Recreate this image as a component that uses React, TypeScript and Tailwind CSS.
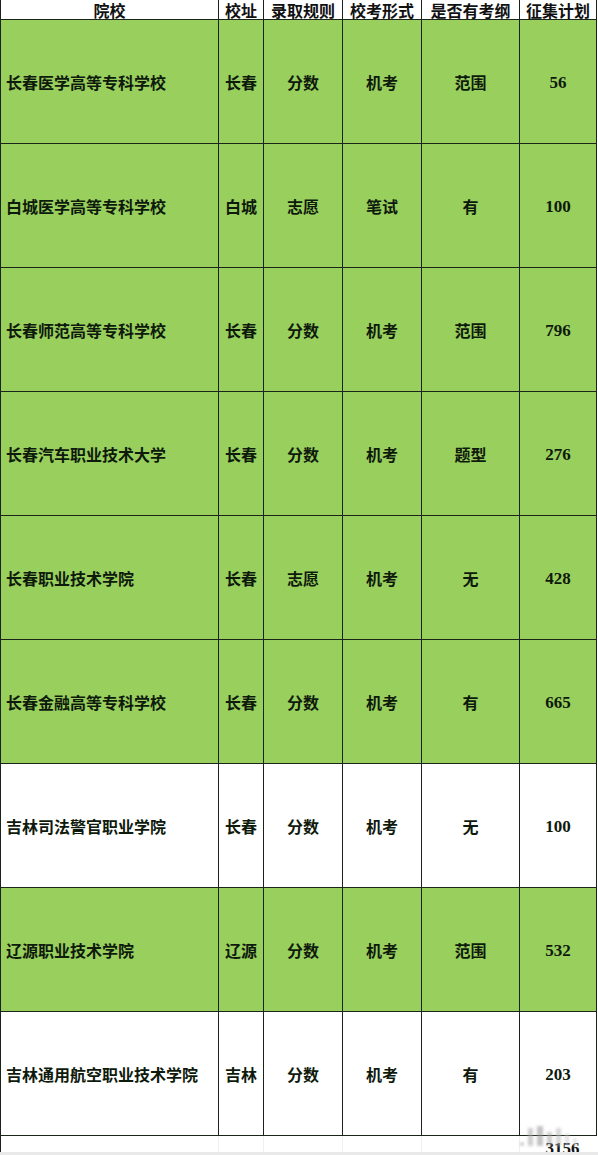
import React from "react";

type Row = { name: string; loc: string; rule: string; form: string; outline: string; plan: string; green: boolean };

const rows: Row[] = [
  { name: "长春医学高等专科学校", loc: "长春", rule: "分数", form: "机考", outline: "范围", plan: "56", green: true },
  { name: "白城医学高等专科学校", loc: "白城", rule: "志愿", form: "笔试", outline: "有", plan: "100", green: true },
  { name: "长春师范高等专科学校", loc: "长春", rule: "分数", form: "机考", outline: "范围", plan: "796", green: true },
  { name: "长春汽车职业技术大学", loc: "长春", rule: "分数", form: "机考", outline: "题型", plan: "276", green: true },
  { name: "长春职业技术学院", loc: "长春", rule: "志愿", form: "机考", outline: "无", plan: "428", green: true },
  { name: "长春金融高等专科学校", loc: "长春", rule: "分数", form: "机考", outline: "有", plan: "665", green: true },
  { name: "吉林司法警官职业学院", loc: "长春", rule: "分数", form: "机考", outline: "无", plan: "100", green: false },
  { name: "辽源职业技术学院", loc: "辽源", rule: "分数", form: "机考", outline: "范围", plan: "532", green: true },
  { name: "吉林通用航空职业技术学院", loc: "吉林", rule: "分数", form: "机考", outline: "有", plan: "203", green: false },
];

const cols = "grid grid-cols-[218px_45px_79px_79px_98px_77px]";
const cjk = "font-['Noto_Sans_CJK_SC',sans-serif]";
const serif = "font-['Liberation_Serif','Noto_Sans_CJK_SC',serif]";

export default function App() {
  return (
    <div className="w-[598px] h-[1155px] bg-white overflow-hidden relative text-[#0e1a0c]">
      <div className="border-l border-[#1b2418] w-[597px]">
        {/* header */}
        <div className={`${cols} h-[20px] border-b-[1.5px] border-[#1b2418] bg-white ${cjk} font-bold text-[16px] leading-[19px] text-[#111]`}>
          <div className="border-r-[1.5px] border-[#1b2418] flex items-center justify-center pt-[1px]">院校</div>
          <div className="border-r-[1.5px] border-[#1b2418] flex items-center justify-center pt-[1px]">校址</div>
          <div className="border-r-[1.5px] border-[#1b2418] flex items-center justify-center pt-[1px]">录取规则</div>
          <div className="border-r-[1.5px] border-[#1b2418] flex items-center justify-center pt-[1px]">校考形式</div>
          <div className="border-r-[1.5px] border-[#1b2418] flex items-center justify-center pt-[1px]">是否有考纲</div>
          <div className="border-r-[1.5px] border-[#1b2418] flex items-center justify-center pt-[1px]">征集计划</div>
        </div>
        {rows.map((r, i) => (
          <div
            key={i}
            className={`${cols} h-[124px] border-b-[1.5px] border-[#1b2418] ${r.green ? "bg-[#99cf5d]" : "bg-white"} text-[16px] ${cjk} font-bold`}
          >
            <div className="border-r-[1.5px] border-[#1b2418] flex items-center pl-[5px] whitespace-nowrap">{r.name}</div>
            <div className="border-r-[1.5px] border-[#1b2418] flex items-center justify-center">{r.loc}</div>
            <div className="border-r-[1.5px] border-[#1b2418] flex items-center justify-center">{r.rule}</div>
            <div className="border-r-[1.5px] border-[#1b2418] flex items-center justify-center">{r.form}</div>
            <div className="border-r-[1.5px] border-[#1b2418] flex items-center justify-center">{r.outline}</div>
            <div className={`border-r-[1.5px] border-[#1b2418] flex items-center justify-center pt-[3px] ${serif} text-[17px] font-bold`}>{r.plan}</div>
          </div>
        ))}
        {/* total row */}
        <div className={`${cols} h-[17px]`}>
          <div className="border-r border-[#f0f0f0]" />
          <div className="border-r border-[#f0f0f0]" />
          <div className="border-r border-[#f0f0f0]" />
          <div className="border-r border-[#f0f0f0]" />
          <div className="border-r border-[#f0f0f0]" />
          <div className={`flex justify-center pl-[8px] ${serif} font-bold text-[17px] leading-[14px] pt-[6px] h-[17px] overflow-visible text-[#111]`}>3156</div>
        </div>
      </div>
      <div className="absolute left-0 right-0 bottom-0 h-[3px] bg-[#e9e9e9]" />
      {/* watermark */}
      <div className="absolute left-[520px] top-[1124px] w-[70px] h-[22px] flex items-end gap-[4px] opacity-60 pointer-events-none">
        <div className="w-[4px] h-[4px] bg-[#bbb] blur-[1px]" />
        <div className="w-[5px] h-[18px] bg-[#aaa] blur-[1.5px]" />
        <div className="w-[6px] h-[20px] bg-[#999] blur-[1.5px]" />
        <div className="w-[5px] h-[14px] bg-[#aaa] blur-[1.5px]" />
        <div className="w-[5px] h-[18px] bg-[#bbb] blur-[1.5px]" />
        <div className="w-[4px] h-[12px] bg-[#ccc] blur-[1.5px]" />
        <div className="w-[4px] h-[8px] bg-[#ddd] blur-[1px]" />
      </div>
    </div>
  );
}
